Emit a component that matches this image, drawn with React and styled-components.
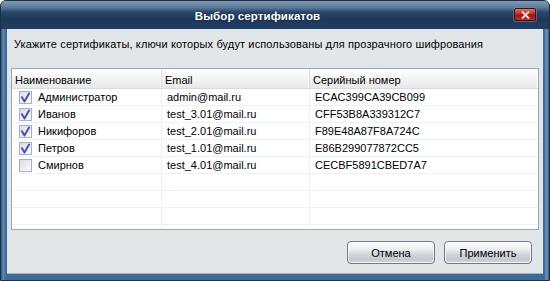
import React from "react";
import styled, { createGlobalStyle } from "styled-components";

const GlobalStyle = createGlobalStyle`
  html, body {
    margin: 0;
    padding: 0;
    background: #ffffff;
  }
  body {
    width: 550px;
    height: 281px;
    overflow: hidden;
    font-family: "Liberation Sans", Arial, sans-serif;
    font-size: 11px;
    color: #000;
  }
`;

const Window = styled.div`
  box-sizing: border-box;
  width: 550px;
  height: 281px;
  display: flex;
  flex-direction: column;
  border: 1px solid #1d2f44;
  border-radius: 6px 6px 0 0;
  background: linear-gradient(90deg, #2f4f73 0px, #5f8cbb 2px, #3f6a97 5px, #3f6a97 calc(100% - 5px), #6a96c4 calc(100% - 2px), #2f4f73 100%);
  overflow: hidden;
`;

const TitleBar = styled.div`
  height: 28px;
  flex: none;
  display: flex;
  align-items: center;
  padding-right: 13px;
  background: linear-gradient(180deg, #7f99b5 0px, #5f7e9f 6px, #2a476a 11px, #1e385a 18px, #223e61 28px);
`;

const Title = styled.div`
  flex: 1;
  text-align: center;
  color: #ffffff;
  font-weight: bold;
  font-size: 11.5px;
  letter-spacing: 0.1px;
  padding-top: 2px;
  text-shadow: 0 0 2px rgba(0, 0, 0, 0.5);
`;

const CloseButton = styled.div`
  box-sizing: border-box;
  width: 22px;
  height: 13px;
  margin-top: -1px;
  display: flex;
  align-items: center;
  justify-content: center;
  border: 1px solid #3a1010;
  border-radius: 2px;
  background: linear-gradient(180deg, #e4716b 0%, #c42a20 45%, #a3130c 55%, #c03026 100%);
  box-shadow: 0 0 0 1px rgba(120, 150, 180, 0.5);
`;

const Body = styled.div`
  flex: 1;
  display: flex;
  flex-direction: column;
  margin: 0 6px 6px 6px;
  background: #e3e6e9;
  border-bottom: 1px solid #9fb3c8;
`;

const Hint = styled.div`
  padding: 8px 0 0 7px;
  height: 30px;
  box-sizing: border-box;
  line-height: 14px;
  letter-spacing: 0.13px;
`;

const Table = styled.div`
  margin: 9px 4px 0 4px;
  height: 162px;
  box-sizing: border-box;
  border: 1px solid #99a8b8;
  background: #ffffff;
  overflow: hidden;
`;

const Row = styled.div`
  display: grid;
  grid-template-columns: 150px 148px 1fr;
  height: ${p => (p.header ? "20px" : "17px")};
  box-sizing: border-box;
  border-bottom: 1px solid ${p => (p.header ? "#d7dbe0" : "#eef1f6")};
  background: ${p => (p.header ? "linear-gradient(180deg, #ffffff 0%, #f4f4f4 50%, #e8e8e8 100%)" : "#ffffff")};
`;

const Cell = styled.div`
  display: flex;
  align-items: center;
  gap: 6px;
  padding-left: ${p => (p.header ? "3px" : p.check ? "7px" : "5px")};
  padding-top: ${p => (p.header ? "2px" : "0")};
  border-right: 1px solid ${p => (p.header ? "#d9dce0" : "#eef1f6")};
  box-shadow: ${p => (p.header ? "inset -1px 0 0 #ffffff" : "none")};
  white-space: nowrap;
  overflow: hidden;
  &:last-child {
    border-right: none;
  }
`;

const Box = styled.div`
  box-sizing: border-box;
  width: 13px;
  height: 13px;
  flex: none;
  border: 1px solid #a7b2c0;
  background: linear-gradient(135deg, #d8dde5 0%, #eef0f4 60%, #fbfbfc 100%);
  display: flex;
  align-items: center;
  justify-content: center;
`;

const Footer = styled.div`
  flex: 1;
  display: flex;
  justify-content: flex-end;
  align-items: center;
  gap: 9px;
  padding: 2px 11px 0 0;
`;

const Button = styled.button`
  box-sizing: border-box;
  width: 88px;
  height: 23px;
  border: 1px solid #6d7b8a;
  border-radius: 4px;
  font-family: "Liberation Sans", Arial, sans-serif;
  font-size: 11px;
  color: #000;
  background: linear-gradient(180deg, #fdfdfd 0%, #eceef0 35%, #cfd4d9 60%, #c3c9cf 85%, #d8dce0 100%);
  box-shadow: inset 0 0 0 1px rgba(255, 255, 255, 0.7);
  padding: 0;
`;

const Check = () => (
  <svg width="11" height="11" viewBox="0 0 11 11">
    <path d="M1.5 4.5 L4.5 9.5 L9.5 0.8" fill="none" stroke="#4b4fc0" strokeWidth="2" strokeLinejoin="round" />
  </svg>
);

const certs = [
  { name: "Администратор", email: "admin@mail.ru", serial: "ECAC399CA39CB099", checked: true },
  { name: "Иванов", email: "test_3.01@mail.ru", serial: "CFF53B8A339312C7", checked: true },
  { name: "Никифоров", email: "test_2.01@mail.ru", serial: "F89E48A87F8A724C", checked: true },
  { name: "Петров", email: "test_1.01@mail.ru", serial: "E86B299077872CC5", checked: true },
  { name: "Смирнов", email: "test_4.01@mail.ru", serial: "CECBF5891CBED7A7", checked: false }
];

export default function App() {
  return (
    <>
      <GlobalStyle />
      <Window>
        <TitleBar>
          <Title>Выбор сертификатов</Title>
          <CloseButton>
            <svg width="9" height="8" viewBox="0 0 9 8">
              <path d="M1 0.5 L8 7.5 M8 0.5 L1 7.5" stroke="#f3dede" strokeWidth="1.8" />
            </svg>
          </CloseButton>
        </TitleBar>
        <Body>
          <Hint>Укажите сертификаты, ключи которых будут использованы для прозрачного шифрования</Hint>
          <Table>
            <Row header>
              <Cell header>Наименование</Cell>
              <Cell header>Email</Cell>
              <Cell header>Серийный номер</Cell>
            </Row>
            {certs.map(c => (
              <Row key={c.serial}>
                <Cell check>
                  <Box>{c.checked && <Check />}</Box>
                  {c.name}
                </Cell>
                <Cell>{c.email}</Cell>
                <Cell>{c.serial}</Cell>
              </Row>
            ))}
            {[0, 1, 2, 3, 4].map(i => (
              <Row key={i}>
                <Cell />
                <Cell />
                <Cell />
              </Row>
            ))}
          </Table>
          <Footer>
            <Button>Отмена</Button>
            <Button>Применить</Button>
          </Footer>
        </Body>
      </Window>
    </>
  );
}
